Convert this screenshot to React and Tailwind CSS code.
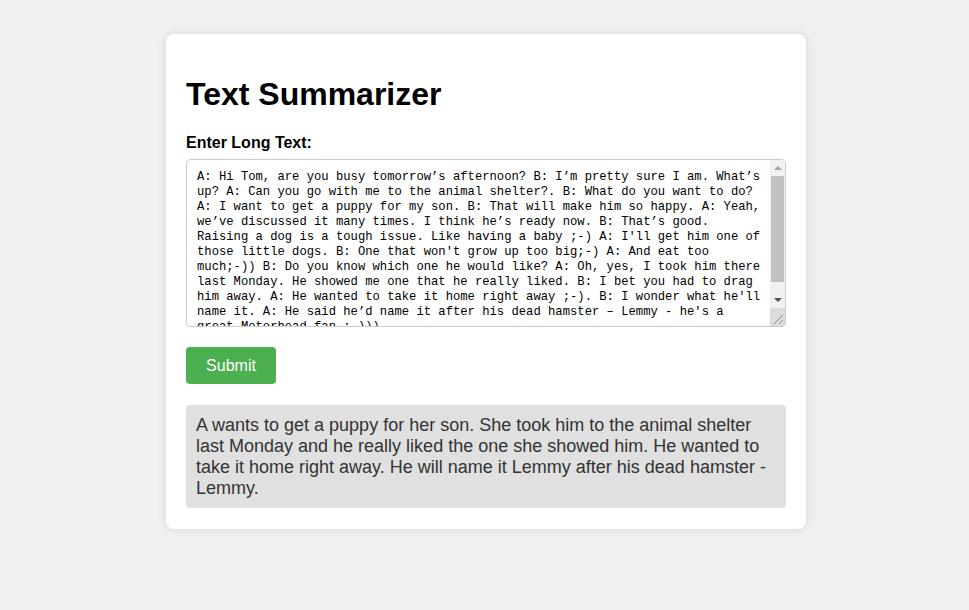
import React, { useState } from 'react';

const SAMPLE_TEXT =
  "A: Hi Tom, are you busy tomorrow’s afternoon? B: I’m pretty sure I am. What’s up? A: Can you go with me to the animal shelter?. B: What do you want to do? A: I want to get a puppy for my son. B: That will make him so happy. A: Yeah, we’ve discussed it many times. I think he’s ready now. B: That’s good. Raising a dog is a tough issue. Like having a baby ;-) A: I'll get him one of those little dogs. B: One that won't grow up too big;-) A: And eat too much;-)) B: Do you know which one he would like? A: Oh, yes, I took him there last Monday. He showed me one that he really liked. B: I bet you had to drag him away. A: He wanted to take it home right away ;-). B: I wonder what he'll name it. A: He said he’d name it after his dead hamster – Lemmy - he's a great Motorhead fan :-)))";

const SUMMARY =
  'A wants to get a puppy for her son. She took him to the animal shelter last Monday and he really liked the one she showed him. He wanted to take it home right away. He will name it Lemmy after his dead hamster - Lemmy.';

// Classic scrollbar drawn over the textarea (the browser here hides real ones)
function FakeScrollbar() {
  return (
    <div className="pointer-events-none absolute top-[1px] right-[1px] bottom-[1px] flex w-[15px] flex-col bg-[#f1f1f1]">
      <div className="flex h-[16px] shrink-0 items-center justify-center">
        <span className="h-0 w-0 border-x-[4px] border-b-[4px] border-x-transparent border-b-[#a3a3a3]" />
      </div>
      <div className="mx-[1px] h-[106px] shrink-0 bg-[#c1c1c1]" />
      <div className="flex-1" />
      <div className="flex h-[17px] shrink-0 items-center justify-center">
        <span className="h-0 w-0 border-x-[4px] border-t-[4px] border-x-transparent border-t-[#505050]" />
      </div>
      <div className="h-[18px] shrink-0 bg-[#dcdcdc]">
        <svg width="15" height="18" viewBox="0 0 15 18" className="block">
          <path d="M4 16 L13 7 M9 16 L13 12" stroke="#8a8a8a" strokeWidth="1" fill="none" />
        </svg>
      </div>
    </div>
  );
}

export default function App() {
  const [text, setText] = useState(SAMPLE_TEXT);
  const [summary] = useState(SUMMARY);

  return (
    <div className="flex min-h-screen justify-center bg-[#f0f0f0] pt-[34px] pl-[3px] font-['Liberation_Sans',Arial,sans-serif]">
      {/* Card */}
      <div className="h-fit w-[640px] rounded-lg bg-white px-5 pt-5 pb-[21px] shadow-[0_0_10px_rgba(0,0,0,0.1)]">
        <h1 className="mt-[22px] mb-[21px] text-[32px] leading-[37px] font-bold text-black">Text Summarizer</h1>

        <label className="mb-[7px] block text-base leading-[18px] font-bold text-black">
          Enter Long Text:
        </label>

        <div className="relative">
          <textarea
            value={text}
            onChange={(e) => setText(e.target.value)}
            className="block h-[168px] w-full resize-none overflow-hidden rounded border border-[#ccc] py-[10px] pr-[22px] pl-[10px] font-['Liberation_Mono',monospace] text-[12.2px] leading-[15px] text-black outline-none"
          />
          <FakeScrollbar />
        </div>

        <button className="mt-5 h-[37px] w-[90px] rounded bg-[#4CAF50] text-center text-base leading-[19px] text-white">
          Submit
        </button>

        {/* Summary output */}
        <div className="mt-[21px] rounded bg-[#e0e0e0] px-[10px] pt-[10px] pb-[9px] text-[18px] leading-[21px] text-[#333]">
          {summary}
        </div>
      </div>
    </div>
  );
}
